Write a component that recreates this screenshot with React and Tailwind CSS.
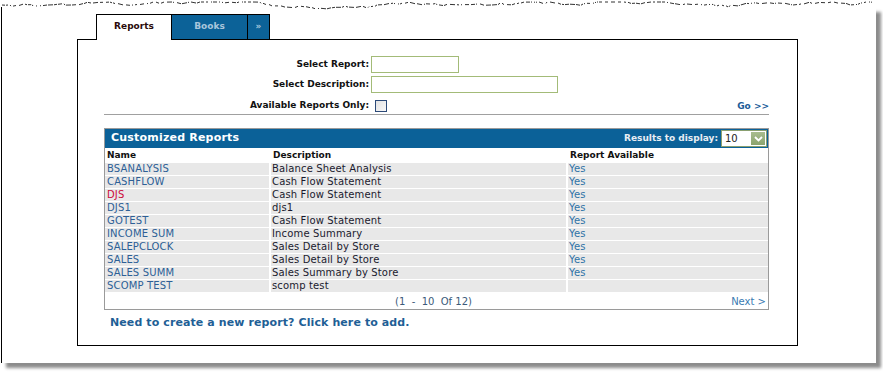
import React from "react";

const rows = [
  { name: "BSANALYSIS", desc: "Balance Sheet Analysis", avail: "Yes" },
  { name: "CASHFLOW", desc: "Cash Flow Statement", avail: "Yes" },
  { name: "DJS", desc: "Cash Flow Statement", avail: "Yes", red: true },
  { name: "DJS1", desc: "djs1", avail: "Yes" },
  { name: "GOTEST", desc: "Cash Flow Statement", avail: "Yes" },
  { name: "INCOME SUM", desc: "Income Summary", avail: "Yes" },
  { name: "SALEPCLOCK", desc: "Sales Detail by Store", avail: "Yes" },
  { name: "SALES", desc: "Sales Detail by Store", avail: "Yes" },
  { name: "SALES SUMM", desc: "Sales Summary by Store", avail: "Yes" },
  { name: "SCOMP TEST", desc: "scomp test", avail: "" },
];

// torn paper edge along the top
function tornPath() {
  let seed = 7;
  const rnd = () => {
    seed = (seed * 9301 + 49297) % 233280;
    return seed / 233280;
  };
  let d = "";
  let x = 2;
  let y = 5;
  while (x < 872) {
    const len = 1 + Math.floor(rnd() * 5);
    const ny = Math.max(2, Math.min(9, y + (rnd() - 0.5) * 3));
    d += `M${x} ${y.toFixed(1)}L${x + len} ${ny.toFixed(1)}`;
    x += len + 1 + Math.floor(rnd() * 3);
    y = ny;
  }
  return d;
}
const TORN = tornPath();

function FormRow({ label, children }) {
  return (
    <div className="flex items-center">
      <div className="w-[293px] text-right pr-[2px] text-[9px] font-bold text-[#111]">{label}</div>
      {children}
    </div>
  );
}

export default function App() {
  return (
    <div className="relative w-[883px] h-[373px] bg-white overflow-hidden font-['DejaVu_Sans',sans-serif]">
      <svg className="absolute left-0 top-0" width="883" height="12">
        <path d={TORN} stroke="#333" strokeWidth="1" fill="none" />
      </svg>

      <div className="ml-px mt-[7px] w-[875px] h-[356px] bg-white border-l border-black shadow-[5px_5px_3px_rgba(0,0,0,0.45)] pt-[7px] pl-[75px]">
        {/* Tabs */}
        <div className="flex ml-[19px] items-start">
          <div className="relative z-10 -mb-px w-[76px] h-[26px] bg-white border border-b-0 border-black flex items-center justify-center text-[9px] font-bold text-[#2a0a0a] pb-[1px]">
            Reports
          </div>
          <div className="w-[76px] h-[25px] bg-[#0c6298] border-t border-r border-black flex items-center justify-center text-[9px] font-bold text-[#a9c6dc]">
            Books
          </div>
          <div className="w-[22px] h-[25px] bg-[#0c6298] border-t border-r border-black flex items-center justify-center text-[9px] font-bold text-[#a9c6dc]">
            »
          </div>
        </div>

        {/* Panel */}
        <div className="w-[721px] h-[307px] border border-black">
          <div className="mt-[16px] flex flex-col gap-[3px]">
            <FormRow label="Select Report:">
              <div className="w-[88px] h-[17px] border border-[#a3bb78] bg-white" />
            </FormRow>
            <FormRow label="Select Description:">
              <div className="w-[187px] h-[17px] border border-[#a3bb78] bg-white" />
            </FormRow>
            <div className="flex items-center h-[14px] mt-[3px]">
              <div className="w-[293px] text-right pr-[2px] text-[9px] font-bold text-[#111]">Available Reports Only:</div>
              <div className="ml-[4px] w-[12px] h-[12px] border border-[#2c4a78] bg-gradient-to-br from-[#e2e2e2] to-[#f8f8f8]" />
              <div className="ml-auto mr-[28px] mt-[2px] text-[9px] font-bold text-[#1b5c98]">Go &gt;&gt;</div>
            </div>
          </div>

          <div className="ml-[26px] mt-[1px] w-[665px] h-px bg-[#a0a0a0]" />

          {/* Report table */}
          <div className="ml-[26px] mt-[13px] w-[665px] border border-[#9a9a9a]">
            <div className="h-[19px] bg-[#0b6198] flex items-center pl-[6px] pr-px">
              <span className="text-[11px] font-bold text-white tracking-[0.2px]">Customized Reports</span>
              <span className="ml-auto text-[9px] font-bold text-[#e8eef4] mr-[3px]">Results to display:</span>
              <div className="w-[46px] h-[17px] bg-white border border-[#8aa070] flex items-center">
                <span className="pl-[3px] text-[10px] text-[#222]">10</span>
                <div className="ml-auto mr-px w-[14px] h-[13px] bg-gradient-to-b from-[#a9bd8f] to-[#8aa36d] flex items-center justify-center">
                  <svg width="9" height="6" viewBox="0 0 9 6">
                    <path d="M1 1L4.5 4.5L8 1" stroke="white" strokeWidth="1.8" fill="none" />
                  </svg>
                </div>
              </div>
            </div>

            <div className="flex h-[15px] items-center text-[9px] font-bold text-[#111]">
              <div className="w-[166px] pl-[2px]">Name</div>
              <div className="w-[297px] pl-[2px]">Description</div>
              <div className="flex-1 pl-[2px]">Report Available</div>
            </div>

            {rows.map((r, i) => (
              <div key={i} className="flex h-[13px] border-b border-white text-[10px] leading-[12px] tracking-[0.15px]">
                <div className={`w-[166px] pl-[2px] bg-[#e8e8e8] border-r-2 border-white ${r.red ? "text-[#cc0a3a]" : "text-[#2d5f96]"}`}>
                  {r.name}
                </div>
                <div className="w-[297px] pl-[1px] bg-[#e8e8e8] border-r-2 border-white text-[#1a1a2e]">{r.desc}</div>
                <div className="flex-1 pl-[1px] bg-[#e8e8e8] text-[#2e72a6]">{r.avail}</div>
              </div>
            ))}

            <div className="relative h-[16px] flex items-center justify-center text-[10px] text-[#3b5a7a]">
              <span className="ml-[-6px]">(1&nbsp;&nbsp;-&nbsp;&nbsp;10&nbsp;&nbsp;Of&nbsp;12)</span>
              <span className="absolute right-[2px] text-[#3a7bb2]">Next &gt;</span>
            </div>
          </div>

          <div className="ml-[32px] mt-[5px] text-[11px] font-bold text-[#1f5f96] tracking-[0.1px]">
            Need to create a new report? Click here to add.
          </div>
        </div>
      </div>
    </div>
  );
}
